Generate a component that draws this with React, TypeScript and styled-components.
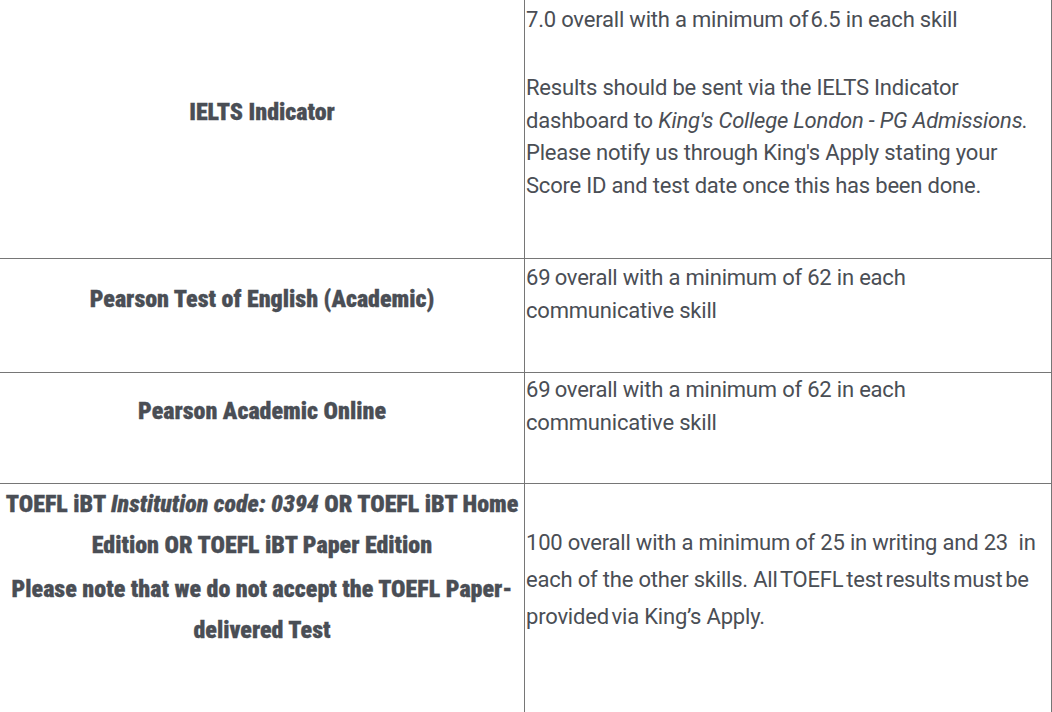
import React from 'react';
import styled, { createGlobalStyle } from 'styled-components';

const GlobalStyle = createGlobalStyle`
  html, body {
    margin: 0;
    padding: 0;
    background: #ffffff;
  }
  body {
    overflow: hidden;
  }
`;

const Viewport = styled.div`
  width: 1052px;
  height: 712px;
  overflow: hidden;
`;

// the page is scrolled a little, so the first row starts above the fold
const RequirementsTable = styled.div`
  display: grid;
  grid-template-columns: 525px 527px;
  grid-template-rows: 293px 114px 111px 260px;
  margin-top: -34px;
  color: #4a4e55;
`;

const Cell = styled.div`
  box-sizing: border-box;
  border-right: 1px solid #767676;
  border-bottom: 1px solid #767676;
`;

const TestName = styled(Cell)<{ $pt?: number; $middle?: boolean }>`
  padding: ${(p) => (p.$middle ? 0 : p.$pt || 0)}px 4px 0;
  text-align: center;
  font-family: 'Liberation Sans Narrow', 'Roboto Condensed', 'DejaVu Sans Condensed', Roboto, sans-serif;
  font-weight: 900;
  font-size: 24px;
  line-height: 41px;
  -webkit-text-stroke: 0.3px #4a4e55;
  ${(p) =>
    p.$middle &&
    `
    display: flex;
    align-items: center;
    justify-content: center;
  `}

  p {
    margin: 0;
  }
  p + p {
    margin-top: 3px;
  }
`;

const Requirement = styled(Cell)<{ $pt: number; $lh?: number; $gap?: number }>`
  padding: ${(p) => p.$pt}px 0 0 1px;
  font-family: Roboto, 'Liberation Sans', sans-serif;
  font-weight: 400;
  font-size: 22px;
  letter-spacing: -0.2px;
  line-height: ${(p) => p.$lh || 32.5}px;
  white-space: nowrap;

  p {
    margin: 0;
  }
  p + p {
    margin-top: ${(p) => p.$gap || 0}px;
  }
`;

const Tight = styled.span`
  word-spacing: -2.5px;
`;

export default function App() {
  return (
    <Viewport>
      <GlobalStyle />
      <RequirementsTable>
        <TestName $middle>IELTS Indicator</TestName>
        <Requirement $pt={38} $gap={35.5}>
          <p>7.0 overall with a minimum of{'\u200a'}6.5 in each skill</p>
          <p>
            Results should be sent via the IELTS Indicator
            <br />
            dashboard to <em>King's College London - PG Admissions.</em>
            <br />
            Please notify us through King's Apply stating your
            <br />
            Score ID and test date once this has been done.
          </p>
        </Requirement>

        <TestName $pt={20}>Pearson Test of English (Academic)</TestName>
        <Requirement $pt={3}>
          <p>
            69{'\u2009'}overall with a minimum of 62 in each
            <br />
            communicative skill
          </p>
        </Requirement>

        <TestName $pt={18}>Pearson Academic Online</TestName>
        <Requirement $pt={1}>
          <p>
            69{'\u2009'}overall with a minimum of 62 in each
            <br />
            communicative skill
          </p>
        </Requirement>

        <TestName $pt={0}>
          <p>
            TOEFL iBT <em>Institution code: 0394</em> OR TOEFL iBT Home
            <br />
            Edition OR TOEFL iBT Paper Edition
          </p>
          <p>
            Please note that we do not accept the TOEFL Paper-
            <br />
            delivered Test
          </p>
        </TestName>
        <Requirement $pt={40} $lh={37}>
          <p>
            100 overall with a minimum of 25 in writing and 23 &nbsp;in
            <br />
            each of the other skills. <Tight>All TOEFL test results must be</Tight>
            <br />
            <Tight>provided via</Tight> King’s Apply.
          </p>
        </Requirement>
      </RequirementsTable>
    </Viewport>
  );
}
